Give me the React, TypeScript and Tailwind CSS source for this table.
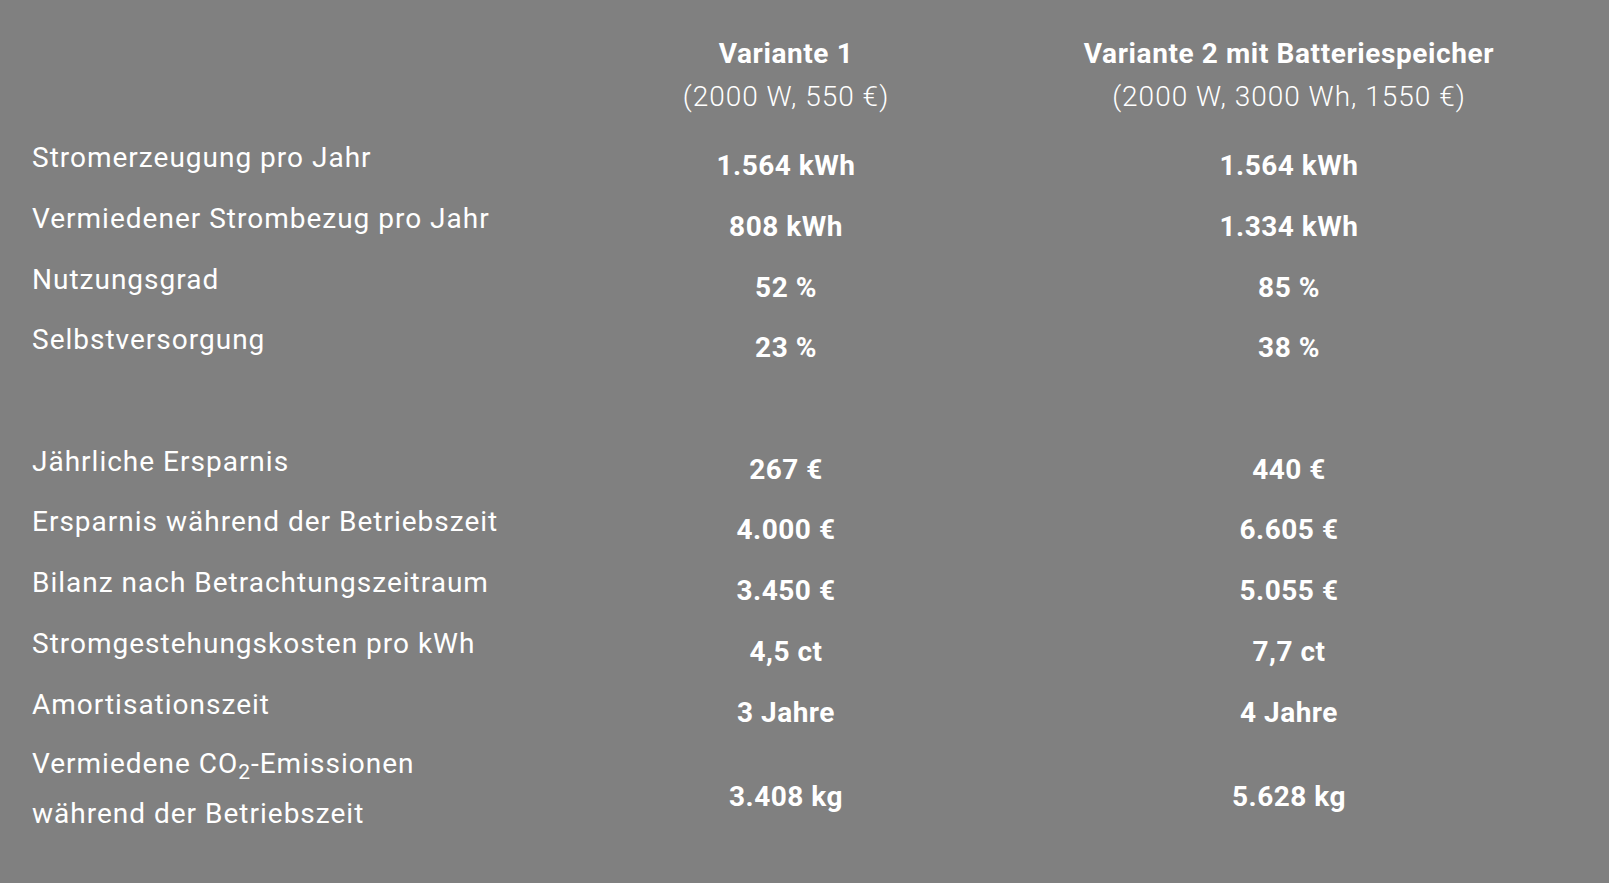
import type { ReactNode } from "react";

type Row = { label: ReactNode; a: string; b: string; tall?: boolean };

const energy: Row[] = [
  { label: "Stromerzeugung pro Jahr", a: "1.564 kWh", b: "1.564 kWh" },
  { label: "Vermiedener Strombezug pro Jahr", a: "808 kWh", b: "1.334 kWh" },
  { label: "Nutzungsgrad", a: "52 %", b: "85 %" },
  { label: "Selbstversorgung", a: "23 %", b: "38 %" },
];

const money: Row[] = [
  { label: "Jährliche Ersparnis", a: "267 €", b: "440 €" },
  { label: "Ersparnis während der Betriebszeit", a: "4.000 €", b: "6.605 €" },
  { label: "Bilanz nach Betrachtungszeitraum", a: "3.450 €", b: "5.055 €" },
  { label: "Stromgestehungskosten pro kWh", a: "4,5 ct", b: "7,7 ct" },
  { label: "Amortisationszeit", a: "3 Jahre", b: "4 Jahre" },
  {
    label: (
      <>
        Vermiedene CO<sub className="text-[0.75em]">2</sub>-Emissionen
        <br />
        während der Betriebszeit
      </>
    ),
    a: "3.408 kg",
    b: "5.628 kg",
    tall: true,
  },
];

function TableRow({ row }: { row: Row }) {
  return (
    <div
      className={`grid grid-cols-[508px_492px_514px] items-center ${
        row.tall ? "h-[109px]" : "h-[60.7px]"
      }`}
    >
      <div className="pb-[8px] leading-[50px] tracking-[1px]">{row.label}</div>
      <div className="pt-[8px] text-center font-bold tracking-[0.5px]">{row.a}</div>
      <div className="pt-[8px] text-center font-bold tracking-[0.5px]">{row.b}</div>
    </div>
  );
}

export default function App() {
  return (
    <div className="min-h-[883px] w-full bg-[#808080] px-[32px] pt-[32px] text-[28px] text-white [font-family:Roboto,'Liberation_Sans',sans-serif]">
      <div className="grid grid-cols-[508px_492px_514px] leading-[43px]">
        <div />
        <div className="text-center">
          <div className="font-bold tracking-[0.6px]">Variante 1</div>
          <div className="font-light tracking-[1px]">(2000 W, 550 €)</div>
        </div>
        <div className="text-center">
          <div className="font-bold tracking-[0.6px]">Variante 2 mit Batteriespeicher</div>
          <div className="font-light tracking-[1px]">(2000 W, 3000 Wh, 1550 €)</div>
        </div>
      </div>
      <div className="mt-[14px]">
        {energy.map((row, i) => (
          <TableRow key={i} row={row} />
        ))}
        <div className="h-[60.7px]" />
        {money.map((row, i) => (
          <TableRow key={i} row={row} />
        ))}
      </div>
    </div>
  );
}
